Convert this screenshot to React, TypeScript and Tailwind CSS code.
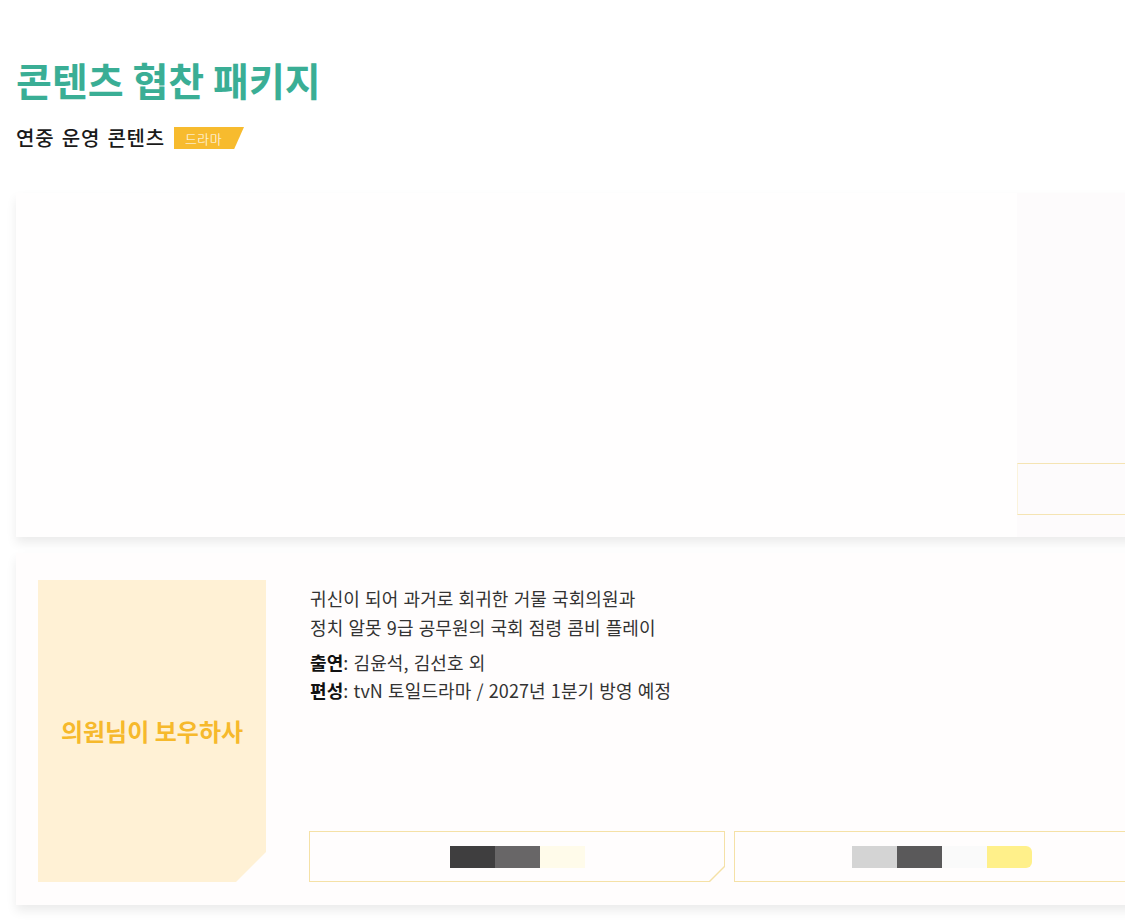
export default function App() {
  return (
    <div className="min-h-[923px] w-[1125px] overflow-hidden bg-white pl-4 pt-[55px] font-['Noto_Sans_CJK_KR',sans-serif] text-[#222]">
      <h1 className="text-[39px] font-bold leading-[48px] text-[#3aae95]">
        콘텐츠 협찬 패키지
      </h1>

      <div className="mt-[24px] flex h-[22px] items-center gap-[9px]">
        <span className="text-[20px] font-medium leading-none tracking-[0.04em] [word-spacing:2px] text-[#1a1a1a]">
          연중 운영 콘텐츠
        </span>
        <span className="flex h-[22px] w-[70px] items-center bg-[#f7bb2e] pl-[11px] text-[13px] font-light leading-none tracking-[0.03em] text-white [clip-path:polygon(0_0,100%_0,86%_100%,0_100%)]">
          드라마
        </span>
      </div>

      {/* card 1 - still loading */}
      <div className="mt-[44px] flex h-[344px] w-[1156px] bg-[#fffefe] shadow-[0_6px_10px_rgba(0,0,0,0.08)]">
        <div className="flex-1" />
        <div className="flex w-[155px] flex-col bg-[#fdfbfc] pb-[22px]">
          <div className="mt-auto h-[52px] border-y border-l border-[#f5e4b3] border-l-[#fbf3dc]" />
        </div>
      </div>

      {/* card 2 */}
      <div className="mt-4 flex w-[1156px] gap-[43px] bg-[#fffdfd] pb-[23px] pl-[22px] pt-[27px] shadow-[0_6px_10px_rgba(0,0,0,0.08)]">
        <div className="flex h-[302px] w-[228px] shrink-0 items-center justify-center bg-[#fff1d5] [clip-path:polygon(0_0,100%_0,100%_calc(100%-30px),calc(100%-30px)_100%,0_100%)]">
          <span className="text-[24px] font-bold text-[#f6b92c]">
            의원님이 보우하사
          </span>
        </div>

        <div className="flex flex-1 flex-col">
          <div className="pl-[1px] pt-[4px] text-[18px] leading-[29px] tracking-[0.005em] [word-spacing:1px] text-[#333]">
            <p>귀신이 되어 과거로 회귀한 거물 국회의원과</p>
            <p>정치 알못 9급 공무원의 국회 점령 콤비 플레이</p>
          </div>
          <div className="mt-[6px] pl-[1px] text-[18px] leading-[28px] tracking-[0.005em] [word-spacing:1px] text-[#333]">
            <p>
              <b className="font-bold text-[#111]">출연</b>: 김윤석, 김선호 외
            </p>
            <p>
              <b className="font-bold text-[#111]">편성</b>: tvN 토일드라마 / 2027년 1분기 방영 예정
            </p>
          </div>

          <div className="mt-auto flex gap-[9px]">
            <div className="h-[51px] w-[416px] bg-[#f5e1a6] p-px [clip-path:polygon(0_0,100%_0,100%_calc(100%-15px),calc(100%-15px)_100%,0_100%)]">
              <div className="flex h-full items-center justify-center bg-[#fffdfd] [clip-path:polygon(0_0,100%_0,100%_calc(100%-15px),calc(100%-15px)_100%,0_100%)]">
                <div className="flex h-[22px]">
                  <span className="w-[45px] bg-[#3f3e3f]" />
                  <span className="w-[45px] bg-[#686667]" />
                  <span className="w-[45px] bg-[#fffbea]" />
                </div>
              </div>
            </div>
            <div className="flex h-[51px] w-[416px] items-center justify-center border border-[#f5e1a6] bg-[#fffdfd]">
              <div className="flex h-[22px]">
                <span className="w-[45px] bg-[#d4d4d4]" />
                <span className="w-[45px] bg-[#5a595a]" />
                <span className="w-[45px] bg-[#fafafa]" />
                <span className="w-[45px] rounded-r-[6px] bg-[#fff08a]" />
              </div>
            </div>
          </div>
        </div>
      </div>
    </div>
  );
}
